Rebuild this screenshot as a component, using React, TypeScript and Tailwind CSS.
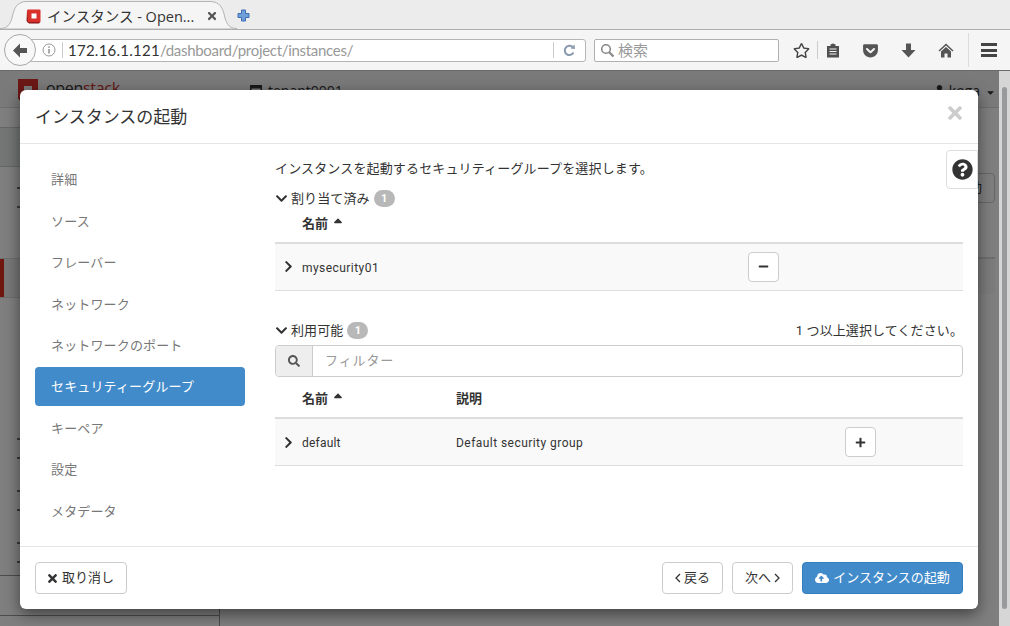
import React from 'react';
import {
  FaCaretDown,
  FaChevronDown,
  FaChevronRight,
  FaCloudUploadAlt,
  FaGetPocket,
  FaMinus,
  FaPlus,
  FaQuestionCircle,
  FaRegStar,
  FaSearch,
  FaSortUp,
  FaTimes,
  FaUser,
} from 'react-icons/fa';

const navItems = [
  '詳細',
  'ソース',
  'フレーバー',
  'ネットワーク',
  'ネットワークのポート',
  'セキュリティーグループ',
  'キーペア',
  '設定',
  'メタデータ',
];

const Favicon = () => (
  <svg width="15" height="15" viewBox="0 0 15 15">
    <rect x="1" y="0.5" width="13.5" height="13" rx="1" fill="#d9302c" />
    <path d="M1 2 L0.5 12 L3 14.5 L13 14.5 L14 13 L2 13 Z" fill="#8e1c1a" />
    <rect x="5.5" y="4.5" width="5" height="5" fill="#fff" />
  </svg>
);

const Tab = () => (
  <div className="relative w-[237px] h-[29px] flex items-center pl-[26px]">
    <svg className="absolute inset-0" width="237" height="29" viewBox="0 0 237 29">
      <path
        d="M0 28.5 C7 28.5 10 25 12 18 C14 8 17 1.5 27 1.5 L210 1.5 C220 1.5 223 8 225 18 C227 25 230 28.5 237 28.5 L237 29 L0 29 Z"
        fill="#f5f5f5"
        stroke="#b4b4b4"
        strokeWidth="1"
      />
    </svg>
    <div className="relative flex items-center gap-[6px] pt-[3px]">
      <Favicon />
      <span className="w-[150px] text-[14.5px] leading-[20px] pt-[1px] text-[#333] whitespace-nowrap">インスタンス - Open...</span>
      <FaTimes className="ml-[3px] text-[12px] text-[#555]" />
    </div>
  </div>
);

const TabBar = () => (
  <div className="h-[30px] bg-[#ececec] border-b border-[#aeaeae] flex items-start">
    <Tab />
    <svg className="mt-[9px]" width="13" height="13" viewBox="0 0 13 13">
      <path d="M4.5 1 H8.5 V4.5 H12 V8.5 H8.5 V12 H4.5 V8.5 H1 V4.5 H4.5 Z" fill="#6f9fd8" stroke="#3c6eb0" strokeWidth="1" />
    </svg>
  </div>
);

const Toolbar = () => (
  <div className="relative h-[41px] bg-[#f5f5f5] border-b border-[#6a6a6a] flex items-center pl-[20px] pr-[12px] text-[#505050]">
    <div className="absolute left-[4px] top-[4px] w-[32px] h-[32px] rounded-full bg-[#f8f8f8] border border-[#a8a8a8] flex items-center justify-center">
      <svg width="16" height="15" viewBox="0 0 16 15">
        <path d="M8 0.5 L1 7.5 L8 14.5 V10 H15 V5 H8 Z" fill="#555" />
      </svg>
    </div>
    <div className="w-[566px] h-[23px] bg-white border border-[#b5b5b5] rounded-r-[3px] flex items-center">
      <div className="w-[20px] ml-[21px] flex items-center">
        <svg width="14" height="14" viewBox="0 0 14 14">
          <circle cx="7" cy="7" r="6" fill="none" stroke="#999" strokeWidth="1" />
          <rect x="6.3" y="6" width="1.4" height="4.5" fill="#888" />
          <rect x="6.3" y="3.4" width="1.4" height="1.5" fill="#888" />
        </svg>
      </div>
      <div className="w-px h-[16px] bg-[#ccc]" />
      <div className="ml-[5px] w-[485px] text-[15px] text-[#999] whitespace-nowrap tracking-[-0.3px] font-['Lato',sans-serif]">
        <span className="text-[#333] tracking-[0.25px]">172.16.1.121</span>/dashboard/project/instances/
      </div>
      <div className="w-px h-[16px] bg-[#ccc]" />
      <div className="flex-1 flex justify-center">
        <svg width="13" height="13" viewBox="0 0 13 13">
          <path d="M10.5 8.5 A4.6 4.6 0 1 1 9.5 3" fill="none" stroke="#8a9bb0" strokeWidth="2" />
          <path d="M7.5 4.5 L12 5 L11.5 0.5 Z" fill="#8a9bb0" />
        </svg>
      </div>
    </div>
    <div className="ml-[8px] w-[185px] h-[23px] bg-white border border-[#b0b0b0] rounded-[2px] flex items-center pl-[5px] gap-[3px]">
      <svg width="15" height="15" viewBox="0 0 15 15">
        <circle cx="6" cy="6" r="4.3" fill="none" stroke="#888" strokeWidth="1.6" />
        <path d="M9.2 9.2 L13.5 13.5" stroke="#888" strokeWidth="2.2" />
      </svg>
      <span className="text-[15px] text-[#999] font-['Noto_Sans_CJK_JP',sans-serif]">検索</span>
    </div>
    <FaRegStar className="ml-[14px] text-[17px] text-[#444]" />
    <div className="ml-[7px] w-px h-[18px] bg-[#ccc]" />
    <svg className="ml-[8px]" width="14" height="15" viewBox="0 0 14 15">
      <path d="M1 3 H4.5 V1.5 L7 0.5 L9.5 1.5 V3 H13 V14.5 H1 Z" fill="#505050" />
      <path d="M3.5 6 H10.5 M3.5 8.5 H10.5 M3.5 11 H10.5" stroke="#f5f5f5" strokeWidth="1.2" />
    </svg>
    <FaGetPocket className="ml-[22px] text-[17px] text-[#555]" />
    <svg className="ml-[22px]" width="15" height="15" viewBox="0 0 15 15">
      <path d="M5 0.5 H10 V7 H14.5 L7.5 14.5 L0.5 7 H5 Z" fill="#555" />
    </svg>
    <svg className="ml-[22px]" width="16" height="15" viewBox="0 0 16 15">
      <path d="M8 0.5 L15.5 7.5 L14.5 8.5 L8 2.6 L1.5 8.5 L0.5 7.5 Z" fill="#555" />
      <path d="M8 4 L13 8.5 V14.5 H9.5 V10.5 H6.5 V14.5 H3 V8.5 Z" fill="#555" />
    </svg>
    <div className="ml-[14px] w-px h-[34px] bg-[#dcdcdc]" />
    <div className="ml-[12px] flex flex-col gap-[2.5px]">
      <div className="w-[16px] h-[3px] bg-[#444]" />
      <div className="w-[16px] h-[3px] bg-[#444]" />
      <div className="w-[16px] h-[3px] bg-[#444]" />
    </div>
  </div>
);

const SideMark = ({ className }: { className: string }) => (
  <div className={`pl-[17px] ${className}`}>
    <div className="w-[8px] h-[2px] bg-[#777]" />
  </div>
);

// page behind the dimmed backdrop, almost all of it hidden by the modal
const BackPage = () => (
  <div className="relative flex-1 bg-white flex min-h-0">
    <div className="flex-1 min-w-0 flex flex-col">
      <div className="h-[37px] shrink-0 bg-[#f4f4f4] border-b border-[#ddd] flex pl-[17px] pt-[7px]">
        <div className="w-[233px] flex">
          <svg width="22" height="24" viewBox="0 0 22 24">
            <path d="M1 1 H21 V20 H15 V8 H7 V20 H1 Z" fill="#d9302c" />
            <path d="M1 20 H7 L4 24 Z" fill="#8e1c1a" />
          </svg>
          <span className="ml-[7px] text-[16px] leading-[20px] tracking-[-0.3px] text-[#333]">
            open<span className="text-[#c9302c]">stack</span>
          </span>
        </div>
        <svg className="mt-[7px]" width="12" height="12" viewBox="0 0 12 12">
          <path d="M0 0 H12 V12 H0 Z M1.5 3.5 V10.5 H10.5 V3.5 Z" fill="#333" />
        </svg>
        <span className="ml-[6px] mt-[4px] text-[14px] leading-[18px] text-[#333]">tenant0001</span>
        <FaCaretDown className="ml-[6px] mt-[9px] text-[11px] text-[#333]" />
        <div className="flex-1" />
        <FaUser className="mt-[7px] text-[11px] text-[#333]" />
        <span className="ml-[4px] mt-[4px] text-[14px] leading-[18px] text-[#333]">koga</span>
        <FaCaretDown className="ml-[5px] mr-[3px] mt-[9px] text-[11px] text-[#333]" />
      </div>
      <div className="flex-1 flex min-h-0">
        <div className="w-[220px] shrink-0 border-r border-[#999] flex flex-col">
          <div className="h-[19px]" />
          <div className="h-[40px] bg-[#e8eaea] border-y border-[#ccc]" />
          <SideMark className="pt-[20px]" />
          <SideMark className="pt-[17px]" />
          <div className="mt-[50px] h-[40px] flex border-y border-[#ddd] bg-[#f0f0f0]">
            <div className="w-[4px] h-full bg-[#e03020]" />
          </div>
          <SideMark className="pt-[140px]" />
          <SideMark className="pt-[17px]" />
          <SideMark className="pt-[31px]" />
          <SideMark className="pt-[17px]" />
          <SideMark className="pt-[31px]" />
          <SideMark className="pt-[17px]" />
          <div className="mt-[12px] border-t border-[#999]" />
          <div className="mt-[39px] border-t border-[#999]" />
        </div>
        <div className="flex-1 pr-[4px] pt-[65px]">
          <div className="ml-auto w-[100px] h-[30px] border border-[#ccc] rounded-[4px] bg-white flex items-center justify-end pr-[12px] text-[13px] text-[#333]">起動</div>
          <div className="mt-[54px] h-[37px] border-t-2 border-[#ddd] bg-[#f9f9f9]" />
        </div>
      </div>
    </div>
    <div className="absolute inset-0 bg-black/50" />
  </div>
);

const Scrollbar = () => (
  <div className="w-[11px] bg-[#d6d6d6] pt-[16px] pb-[17px] px-[3px] flex">
    <div className="w-full bg-[#999a9b] rounded-full" />
  </div>
);

const SectionTitle = ({ label }: { label: string }) => (
  <div className="flex items-center text-[13px] text-[#333]">
    <FaChevronDown className="text-[13px]" />
    <span className="ml-[3px] tracking-[0.1px]">{label}</span>
    <span className="ml-[4px] w-[21px] h-[17px] rounded-full bg-[#b8b8b8] text-white text-[11px] font-bold leading-[17px] text-center">1</span>
  </div>
);

const SortHead = () => (
  <span className="flex items-center font-bold">
    名前
    <FaSortUp className="ml-[3px] text-[14px] text-[#333]" />
  </span>
);

const IconButton = ({ children }: { children: React.ReactNode }) => (
  <button className="w-[31px] h-[30px] bg-white border border-[#ccc] rounded-[4px] flex items-center justify-center text-[#333] text-[11px]">
    {children}
  </button>
);

const SmallChevron = ({ d }: { d: string }) => (
  <svg width="6" height="10" viewBox="0 0 6 10">
    <path d={d} fill="none" stroke="#333" strokeWidth="1.3" />
  </svg>
);

const Allocated = () => (
  <div>
    <SectionTitle label="割り当て済み" />
    <div className="h-[35px] pl-[27px] flex items-center text-[13px] text-[#333] border-b-2 border-[#ddd] pb-[2px]">
      <SortHead />
    </div>
    <div className="h-[47px] bg-[#f9f9f9] border-b border-[#ddd] flex items-center text-[12px] text-[#333]">
      <FaChevronRight className="ml-[7px] text-[13px]" />
      <span className="ml-[7px] w-[446px] pt-[2px] tracking-[0.45px]">mysecurity01</span>
      <IconButton>
        <FaMinus />
      </IconButton>
    </div>
  </div>
);

const Available = () => (
  <div className="mt-[30px]">
    <div className="flex items-center justify-between">
      <SectionTitle label="利用可能" />
      <span className="text-[13px] text-[#333] tracking-[0.1px]">1 つ以上選択してください。</span>
    </div>
    <div className="mt-[5px] h-[32px] flex border border-[#ccc] rounded-[4px] overflow-hidden text-[13px]">
      <div className="w-[37px] bg-[#eee] border-r border-[#ccc] flex items-center justify-center text-[#555] text-[12px]">
        <FaSearch />
      </div>
      <div className="flex-1 pl-[12px] flex items-center text-[#999] tracking-[0.9px]">フィルター</div>
    </div>
    <div className="h-[42px] pt-[3px] flex items-center text-[13px] text-[#333] border-b-2 border-[#ddd] pl-[27px]">
      <div className="w-[154px]">
        <SortHead />
      </div>
      <span className="font-bold">説明</span>
    </div>
    <div className="h-[47px] bg-[#f9f9f9] border-b border-[#ddd] flex items-center text-[12px] text-[#333]">
      <FaChevronRight className="ml-[7px] text-[13px]" />
      <span className="ml-[7px] w-[154px] pt-[2px] tracking-[0.2px]">default</span>
      <span className="w-[389px] pt-[2px] tracking-[0.45px]">Default security group</span>
      <IconButton>
        <FaPlus />
      </IconButton>
    </div>
  </div>
);

const Modal = () => (
  <div className="absolute left-[20px] top-[90px] w-[958px] h-[519px] bg-white rounded-[6px] shadow-[0_5px_15px_rgba(0,0,0,0.5)] flex flex-col font-['Roboto','Noto_Sans_CJK_JP',sans-serif]">
    <div className="h-[54px] shrink-0 border-b border-[#e5e5e5] pl-[15px] pr-[13px] flex items-center justify-between">
      <h4 className="mt-[3px] text-[17px] text-[#333]">インスタンスの起動</h4>
      <FaTimes className="text-[20px] text-[#ccc] mb-[8px]" />
    </div>
    <div className="relative flex-1 min-h-0 flex">
      <div className="w-[255px] shrink-0 pl-[15px] pr-[30px] pt-[15.7px] text-[13px] tracking-[0.15px]">
        {navItems.map((item, i) => (
          <div
            key={item}
            className={`h-[39px] mb-[2.4px] pl-[16px] pt-[2px] flex items-center rounded-[4px] ${
              i === 5 ? 'bg-[#428bca] text-white' : 'text-[#777]'
            }`}
          >
            {item}
          </div>
        ))}
      </div>
      <div className="flex-1 pr-[15px] pt-[15px]">
        <p className="h-[30px] text-[13px] leading-[20px] tracking-[0.15px] text-[#333]">インスタンスを起動するセキュリティーグループを選択します。</p>
        <Allocated />
        <Available />
      </div>
      <button className="absolute right-0 top-[6px] w-[32px] h-[39px] bg-white border border-[#ddd] rounded-l-[4px] flex items-center justify-center text-[#333] text-[21px]">
        <FaQuestionCircle />
      </button>
    </div>
    <div className="h-[63px] shrink-0 border-t border-[#e5e5e5] px-[15px] pt-[15px] flex items-start text-[13px] text-[#333]">
      <button className="w-[92px] h-[32px] border border-[#ccc] rounded-[4px] flex items-center pl-[10px] gap-[3px]">
        <FaTimes className="text-[13px]" />
        取り消し
      </button>
      <div className="flex-1" />
      <button className="w-[61px] h-[32px] border border-[#ccc] rounded-[4px] flex items-center justify-center gap-[3px]">
        <SmallChevron d="M5 1 L1 5 L5 9" />
        戻る
      </button>
      <button className="ml-[9px] w-[61px] h-[32px] border border-[#ccc] rounded-[4px] flex items-center justify-center gap-[3px]">
        次へ
        <SmallChevron d="M1 1 L5 5 L1 9" />
      </button>
      <button className="ml-[9px] w-[161px] h-[32px] bg-[#428bca] border border-[#357ebd] rounded-[4px] text-white flex items-center justify-center gap-[4px]">
        <FaCloudUploadAlt className="text-[14px]" />
        インスタンスの起動
      </button>
    </div>
  </div>
);

const App: React.FC = () => {
  return (
    <div className="relative w-[1010px] h-[626px] overflow-hidden flex flex-col font-['Open_Sans','Noto_Sans_CJK_JP',sans-serif]">
      <TabBar />
      <Toolbar />
      <div className="flex-1 flex min-h-0">
        <BackPage />
        <Scrollbar />
      </div>
      <Modal />
    </div>
  );
};

export default App;
